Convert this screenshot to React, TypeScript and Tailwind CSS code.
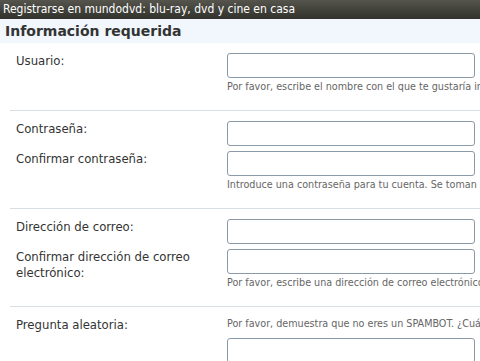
import React from 'react';

const font = "font-['DejaVu_Sans_Condensed','DejaVu_Sans',sans-serif]";

function Field() {
  return <div className="h-[25px] w-[248px] shrink-0 rounded-[3px] border border-[#8b9aa8] bg-white" />;
}

function Help({ children, className = '' }: { children: React.ReactNode; className?: string }) {
  return <p className={`whitespace-nowrap text-[10.7px] leading-[14px] text-[#666] ${className}`}>{children}</p>;
}

function Row({ labels, help, helpFirst, inputs }: { labels: React.ReactNode[]; help: string; helpFirst?: boolean; inputs: number }) {
  return (
    <div className="flex border-t border-[#d6dfe6] ml-[10px] pt-[10px] pb-[16px]">
      <div className="w-[217px] shrink-0 pl-[6px] flex flex-col gap-[5px]">
        {labels.map((l, i) => (
          <div key={i} className="min-h-[25px] text-[13px] leading-[16px] text-[#333] pr-[20px]">{l}</div>
        ))}
      </div>
      <div className="flex flex-col gap-[5px]">
        {helpFirst && <Help className="mb-[2px]">{help}</Help>}
        {Array.from({ length: inputs }).map((_, i) => <Field key={i} />)}
        {!helpFirst && <Help className="-mt-[3px]">{help}</Help>}
      </div>
    </div>
  );
}

export default function App() {
  return (
    <div className={`w-[480px] h-[361px] overflow-hidden bg-white ${font}`}>
      <div className="h-[19px] bg-gradient-to-b from-[#55554e] to-[#32322c] pl-[3px] text-[12px] leading-[19px] text-white whitespace-nowrap">
        Registrarse en mundodvd: blu-ray, dvd y cine en casa
      </div>
      <div className="h-[24px] bg-[#f1f7fc] pl-[5px] font-['DejaVu_Sans',sans-serif] text-[14px] font-bold leading-[24px] text-[#333]">
        Información requerida
      </div>
      <div className="pt-[10px]">
        <div className="flex ml-[10px] pb-[16px]">
          <div className="w-[217px] shrink-0 pl-[6px] text-[13px] leading-[16px] text-[#333]">Usuario:</div>
          <div className="flex flex-col gap-[2px]">
            <Field />
            <Help>Por favor, escribe el nombre con el que te gustaría iniciar sesión.</Help>
          </div>
        </div>
        <Row labels={['Contraseña:', 'Confirmar contraseña:']} inputs={2} help="Introduce una contraseña para tu cuenta. Se toman en cuenta mayúsculas." />
        <Row labels={['Dirección de correo:', 'Confirmar dirección de correo electrónico:']} inputs={2} help="Por favor, escribe una dirección de correo electrónico válida." />
        <Row labels={['Pregunta aleatoria:']} inputs={1} helpFirst help="Por favor, demuestra que no eres un SPAMBOT. ¿Cuántas letras tiene la palabra?" />
      </div>
    </div>
  );
}
